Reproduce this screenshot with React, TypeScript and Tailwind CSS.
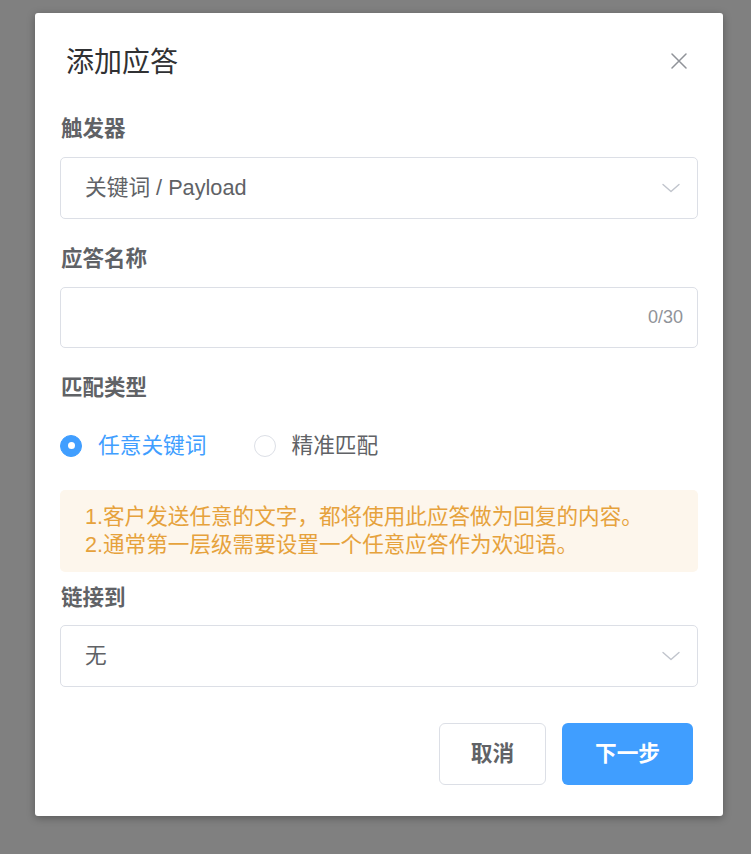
import { useState } from 'react';

const font = { fontFamily: '"Liberation Sans", "Noto Sans CJK SC", sans-serif' };

function Chevron() {
    return (
        <svg width="18" height="10" viewBox="0 0 18 10" fill="none" className="shrink-0">
            <path d="M1 1.5 L9 8.5 L17 1.5" stroke="#c0c4cc" strokeWidth="1.4" strokeLinecap="round" strokeLinejoin="round" />
        </svg>
    );
}

function SelectBox({ value }: { value: string }) {
    return (
        <div className="h-[62px] rounded-[5px] border border-[#dcdfe6] bg-white flex items-center justify-between pl-[24px] pr-[17px]">
            <span className="text-[21.7px] text-[#606266]">{value}</span>
            <Chevron />
        </div>
    );
}

function Label({ children, h = 'h-[56px]' }: { children: string; h?: string }) {
    return <div className={`${h} flex items-center pl-[1px] text-[21.5px] font-bold text-[#606266]`}>{children}</div>;
}

export default function App() {
    const [match, setMatch] = useState<'any' | 'exact'>('any');

    return (
        <div className="min-h-screen bg-[#808080] pt-[13px] pl-[35px]" style={font}>
            <div className="w-[688px] h-[803px] bg-white rounded-[3px] shadow-[0_2px_8px_rgba(0,0,0,0.3)] flex flex-col">
                <div className="h-[88px] pt-[22px] pl-[31px] pr-[36px] flex items-start justify-between">
                    <div className="h-[56px] flex items-center text-[28px] text-[#303133]">添加应答</div>
                    <button className="mt-[18px] w-[16px] h-[16px] flex items-center justify-center">
                        <svg width="16" height="16" viewBox="0 0 16 16" fill="none">
                            <path d="M1 1 L15 15 M15 1 L1 15" stroke="#909399" strokeWidth="1.5" strokeLinecap="round" />
                        </svg>
                    </button>
                </div>

                <div className="px-[25px] flex flex-col">
                    <Label>触发器</Label>
                    <SelectBox value="关键词 / Payload" />

                    <div className="h-[13px]" />
                    <Label h="h-[55px]">应答名称</Label>
                    <div className="h-[61px] rounded-[5px] border border-[#dcdfe6] bg-white flex items-center justify-end pr-[14px]">
                        <span className="text-[18px] text-[#909399]">0/30</span>
                    </div>

                    <div className="h-[12px]" />
                    <Label>匹配类型</Label>
                    <div className="h-[60px] flex items-center gap-[48px]">
                        <button className="flex items-center gap-[16px]" onClick={() => setMatch('any')}>
                            <span className={`w-[22px] h-[22px] rounded-full flex items-center justify-center ${match === 'any' ? 'bg-[#409eff] border border-[#409eff]' : 'border border-[#dcdfe6] bg-white'}`}>
                                {match === 'any' && <span className="w-[7px] h-[7px] rounded-full bg-white" />}
                            </span>
                            <span className={`text-[21.7px] ${match === 'any' ? 'text-[#409eff]' : 'text-[#606266]'}`}>任意关键词</span>
                        </button>
                        <button className="flex items-center gap-[15px]" onClick={() => setMatch('exact')}>
                            <span className={`w-[22px] h-[22px] rounded-full flex items-center justify-center ${match === 'exact' ? 'bg-[#409eff] border border-[#409eff]' : 'border border-[#dcdfe6] bg-white'}`}>
                                {match === 'exact' && <span className="w-[7px] h-[7px] rounded-full bg-white" />}
                            </span>
                            <span className={`text-[21.7px] ${match === 'exact' ? 'text-[#409eff]' : 'text-[#606266]'}`}>精准匹配</span>
                        </button>
                    </div>

                    <div className="h-[14px]" />
                    <div className="h-[82px] rounded-[5px] bg-[#fdf6ec] pl-[25px] flex flex-col justify-center text-[21.6px] leading-[28px] text-[#e6a23c]">
                        <div>1.客户发送任意的文字，都将使用此应答做为回复的内容。</div>
                        <div>2.通常第一层级需要设置一个任意应答作为欢迎语。</div>
                    </div>

                    <Label h="h-[53px]">链接到</Label>
                    <SelectBox value="无" />

                    <div className="h-[36px]" />
                    <div className="flex justify-end gap-[16px] pr-[5px]">
                        <button className="w-[107px] h-[62px] rounded-[6px] border border-[#dcdfe6] bg-white text-[21.7px] font-bold text-[#606266]">取消</button>
                        <button className="w-[131px] h-[62px] rounded-[6px] bg-[#409eff] text-[21.7px] font-bold text-white">下一步</button>
                    </div>
                </div>
            </div>
        </div>
    );
}
